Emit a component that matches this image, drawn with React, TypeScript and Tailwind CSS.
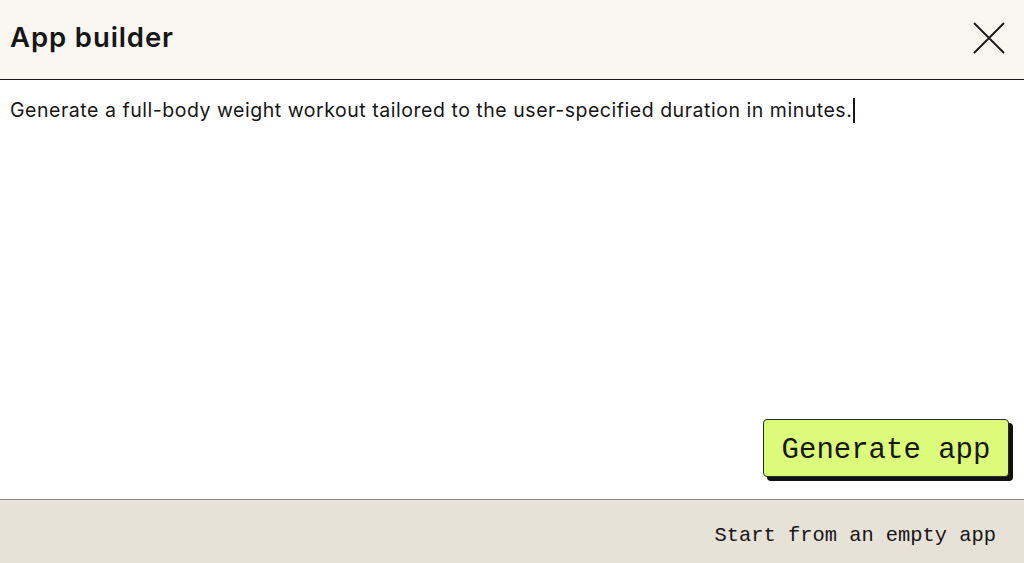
export default function App() {
  return (
    <div className="flex h-[563px] w-[1024px] flex-col overflow-hidden bg-white text-[#161616]">
      {/* Header */}
      <header className="flex h-[80px] shrink-0 items-center justify-between border-b border-[#1a1a1a] bg-[#f8f6f1] pb-[3px] pl-[10px] pr-[19px]">
        <h1 className="font-['Inter',sans-serif] text-[27.5px] font-semibold tracking-[0.9px]">App builder</h1>
        <button className="text-[#161616]">
          <svg width="32" height="32" viewBox="0 0 32 32" fill="none" stroke="currentColor" strokeWidth="1.8">
            <path d="M1 1 L31 31 M31 1 L1 31" />
          </svg>
        </button>
      </header>

      {/* Prompt */}
      <main className="flex flex-1 flex-col justify-between pb-[22px] pl-[10px] pr-[15px] pt-[17px]">
        <p className="flex items-center font-['Inter',sans-serif] text-[19.5px] leading-[26px] tracking-[0.53px]">
          Generate a full-body weight workout tailored to the user-specified duration in minutes.
          <span className="ml-[1px] inline-block h-[25px] w-[2px] bg-[#161616]" />
        </p>
        <div className="flex justify-end">
          <button className="h-[58px] w-[246px] rounded-[4px] border border-[#2a2a2a] bg-[#dcfb7a] pt-[5px] font-['Liberation_Mono',monospace] text-[29px] shadow-[4px_4px_0_#111]">
            Generate app
          </button>
        </div>
      </main>

      {/* Footer */}
      <footer className="flex h-[64px] shrink-0 items-center justify-end border-t border-[#8a8680] bg-[#e7e2d8] pr-[28px] pt-[9px]">
        <button className="font-['Liberation_Mono',monospace] text-[20.4px]">Start from an empty app</button>
      </footer>
    </div>
  );
}
